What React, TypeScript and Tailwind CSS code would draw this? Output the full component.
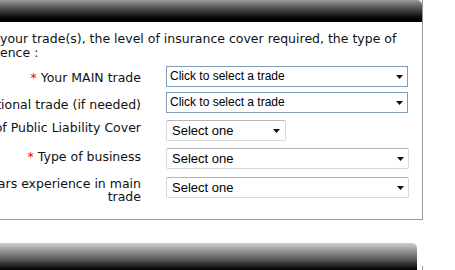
type SelectProps = { text: string; box: string; font: string }

function Select({ text, box, font }: SelectProps) {
  return (
    <div className={`flex h-[21px] items-center justify-between bg-white ${box}`}>
      <span className={`whitespace-nowrap text-black ${font}`}>{text}</span>
      <svg width="7" height="4" viewBox="0 0 7 4">
        <path d="M0 0h7L3.5 4z" fill="#111" />
      </svg>
    </div>
  )
}

// right-aligned label; text longer than the column runs off to the left edge
function Label({ children, req, pad }: { children: React.ReactNode; req?: boolean; pad: string }) {
  return (
    <div className={`flex w-[141px] shrink-0 justify-end ${pad}`}>
      <div className="whitespace-nowrap text-right">
        {req && <span className="text-[#ff0000]">* </span>}
        {children}
      </div>
    </div>
  )
}

const tradeBox = 'w-[242px] border border-[#7f9db9] pl-[3px] pr-[4px]'
const tradeFont = "font-['Liberation_Sans',Arial,sans-serif] text-[12px]"
const oneBox = 'border border-[#d9d9d9] border-t-[#b5b5b5] rounded-[2px] pl-[5px]'
const oneFont = "font-['Liberation_Sans',Arial,sans-serif] text-[13px]"

export default function App() {
  return (
    <div className="h-[270px] w-[455px] overflow-hidden bg-white font-['DejaVu_Sans',Verdana,sans-serif] text-[12.5px] text-[#111]">
      <section className="w-[423px] border-r border-b border-[#999]">
        <div className="h-[22px] rounded-tr-[5px] bg-gradient-to-b from-[#9a9a9a] via-[#2a2a2a] via-60% to-black" />
        <div className="pt-[10px] pb-[16px]">
          <div className="leading-[14px]">
            <div className="flex whitespace-nowrap">
              <span className="flex w-0 justify-end">Please tell us about&nbsp;</span>
              <span>your trade(s), the level of insurance cover required, the type of</span>
            </div>
            <div className="flex whitespace-nowrap">
              <span className="flex w-0 justify-end">business and your years of experi</span>
              <span>ence :</span>
            </div>
          </div>

          <div className="mt-[6px] flex flex-col leading-[15px]">
            <div className="flex gap-[25px]">
              <Label req pad="pt-[4px]">Your MAIN trade</Label>
              <Select text="Click to select a trade" box={tradeBox} font={tradeFont} />
            </div>
            <div className="mt-[5px] flex gap-[25px]">
              <Label pad="pt-[5px]">Your additional trade (if needed)</Label>
              <Select text="Click to select a trade" box={tradeBox} font={tradeFont} />
            </div>
            <div className="mt-[7px] flex gap-[25px]">
              <Label pad="pt-0">Level of Public Liability Cover</Label>
              <Select text="Select one" box={`w-[120px] pr-[5px] ${oneBox}`} font={oneFont} />
            </div>
            <div className="mt-[7px] flex gap-[25px]">
              <Label req pad="pt-[1px]">Type of business</Label>
              <Select text="Select one" box={`w-[243px] pr-[4px] ${oneBox}`} font={oneFont} />
            </div>
            <div className="mt-[8px] flex gap-[25px]">
              <Label pad="pt-0 leading-[13px]">
                Years experience in main
                <br />
                trade
              </Label>
              <Select text="Select one" box={`w-[243px] pr-[4px] ${oneBox}`} font={oneFont} />
            </div>
          </div>
        </div>
      </section>

      <section className="mt-[23px] flex">
        <div className="h-[30px] w-[417px] rounded-tr-[5px] bg-gradient-to-b from-[#cfcfcf] via-[#5a5a5a] via-55% to-black" />
        <div className="mt-[23px] w-[6px] border-r border-[#999]" />
      </section>
    </div>
  )
}
